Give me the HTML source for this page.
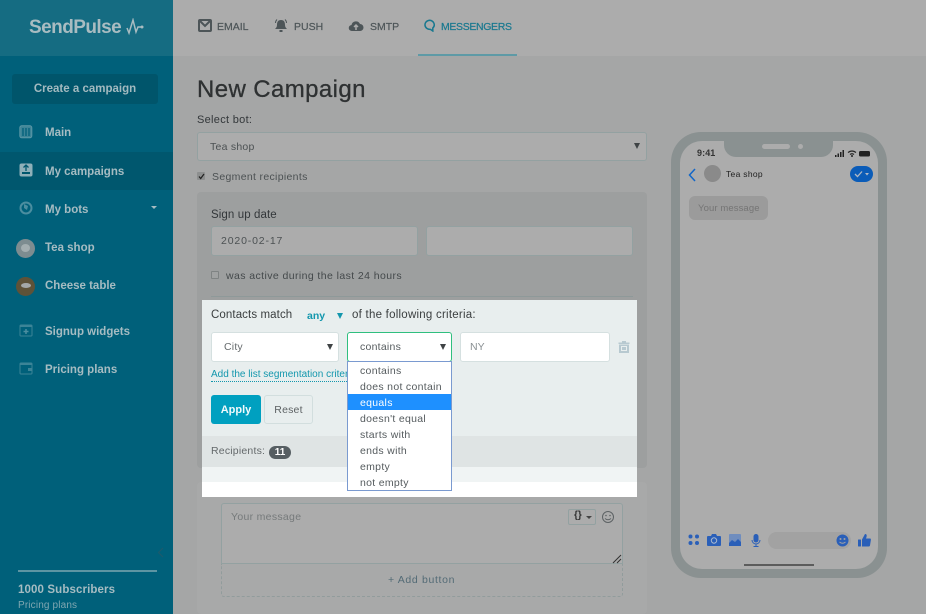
<!DOCTYPE html>
<html><head><meta charset="utf-8"><style>
*{box-sizing:border-box}
html,body{margin:0;padding:0}
body{width:926px;height:614px;overflow:hidden;position:relative;background:#a5a6a6;font-family:"Liberation Sans",sans-serif;font-size:11px;color:#3a3e3f}
.a{position:absolute}
.t{position:absolute;white-space:nowrap;line-height:14px;margin-top:1px}
.nav{color:#a6bcc2;font-weight:bold;font-size:11.5px;left:45px}
.inp{position:absolute;background:#acacac;border:1px solid #93a1a1;border-radius:3px}
.w{position:absolute;background:#fff;border:1px solid #d5e0e0;border-radius:3px}
.tb{color:#4d5558;font-size:10.5px;top:19px;-webkit-text-stroke:.2px currentColor}
.o{position:absolute;left:0;width:103px;height:16px;padding-left:12px;line-height:18px;font-size:10.5px;letter-spacing:.3px;color:#555b5e;white-space:nowrap;overflow:hidden}
.ar{position:absolute;border-left:3.5px solid transparent;border-right:3.5px solid transparent;border-top:6px solid #3f4345}
svg{position:absolute;display:block}
</style></head><body>

<!-- top bar -->
<div class="a" style="left:173px;top:0;width:753px;height:56px;background:#acacac"></div>
<div class="a" style="left:418px;top:54px;width:99px;height:2px;background:#5e9aa6"></div>
<svg style="left:198px;top:19px" width="14" height="13" viewBox="0 0 14 13"><rect x="1" y="1" width="12" height="11" rx="1" fill="none" stroke="#4d5558" stroke-width="2"/><path d="M2 2l5 5 5-5" fill="none" stroke="#4d5558" stroke-width="2"/></svg>
<div class="t tb" style="left:217px">EMAIL</div>
<svg style="left:274px;top:18px" width="14" height="15" viewBox="0 0 14 15"><path d="M7 2c-3 0-4 2-4 5 0 2-1 3-2 4h12c-1-1-2-2-2-4 0-3-1-5-4-5z" fill="#4d5558"/><rect x="5.500" y="12" width="3" height="2" fill="#4d5558"/><path d="M1.500 5q0-2 1.500-3.500M12.500 5q0-2-1.500-3.500" fill="none" stroke="#4d5558"/></svg>
<div class="t tb" style="left:294px">PUSH</div>
<svg style="left:348px;top:19px" width="16" height="13" viewBox="0 0 16 13"><path d="M4 12a3 3 0 0 1-.5-6A4.500 4.500 0 0 1 12 5a3.500 3.500 0 0 1 0 7z" fill="#4d5558"/><path d="M8 11V6M6 8l2-2 2 2" stroke="#acacac" stroke-width="1.500" fill="none"/></svg>
<div class="t tb" style="left:370px">SMTP</div>
<svg style="left:423px;top:19px" width="13" height="13" viewBox="0 0 13 13"><path d="M6.500 1.200a5 4.600 0 1 0 1 9.200l2.300 1.600v-3a5 4.600 0 0 0-3.300-7.800z" fill="none" stroke="#18788f" stroke-width="1.500"/></svg>
<div class="t tb" style="left:441px;color:#18788f;letter-spacing:-.35px">MESSENGERS</div>

<!-- sidebar -->
<div class="a" style="left:0;top:0;width:173px;height:614px;background:#00607a"></div>
<div class="a" style="left:0;top:0;width:173px;height:56px;background:#156c82"></div>
<div class="t" style="left:29px;top:15px;font-size:19px;line-height:24px;color:#a9bcc1;letter-spacing:-.55px;font-weight:bold">SendPulse</div>
<svg style="left:125px;top:18px" width="20" height="18" viewBox="0 0 20 18"><path d="M2 10l2 5 4-13 3 12 2-5h3" fill="none" stroke="#a9bcc1" stroke-width="1.500"/><circle cx="17" cy="9" r="1.500" fill="#a9bcc1"/></svg>
<div class="a" style="left:12px;top:74px;width:146px;height:30px;background:#00556b;border-radius:3px"></div>
<div class="t" style="left:12px;top:81px;width:146px;text-align:center;color:#a3bac0;font-weight:bold;font-size:11.5px">Create a campaign</div>
<div class="a" style="left:0;top:152px;width:173px;height:38px;background:#00576e"></div>

<svg style="left:19px;top:125px" width="14" height="14" viewBox="0 0 14 14"><rect x=".8" y=".8" width="12" height="12" rx="2" fill="#3c8497" stroke="#5c97a6" stroke-width="1"/><path d="M4 3v8M7 3v8M10 3v8" stroke="#00607a" stroke-width="1.300"/></svg>
<div class="t nav" style="top:125px">Main</div>
<svg style="left:19px;top:163px" width="14" height="14" viewBox="0 0 14 14"><rect x=".5" y=".5" width="13" height="13" rx="2" fill="#8fb0b9"/><path d="M7 2v6M4.500 4.500L7 2l2.500 2.500" stroke="#00576e" stroke-width="1.300" fill="none"/><rect x="3" y="9" width="8" height="2" fill="#00576e"/></svg>
<div class="t nav" style="top:164px">My campaigns</div>
<svg style="left:19px;top:201px" width="14" height="14" viewBox="0 0 14 14"><circle cx="7" cy="7" r="5.500" fill="none" stroke="#4c8ea0" stroke-width="2"/><path d="M5 3l4 2-1 4-3-2z" fill="#4c8ea0"/></svg>
<div class="t nav" style="top:202px">My bots</div>
<div class="a" style="left:151px;top:206px;border-left:3px solid transparent;border-right:3px solid transparent;border-top:3px solid #a6bcc2"></div>
<div class="a" style="left:16px;top:239px;width:19px;height:19px;border-radius:50%;background:#7d8c90"></div>
<div class="a" style="left:21px;top:244px;width:9px;height:8px;border-radius:50%;background:#a4aeb0"></div>
<div class="t nav" style="top:240px">Tea shop</div>
<div class="a" style="left:16px;top:277px;width:19px;height:19px;border-radius:50%;background:#5e5238"></div>
<div class="a" style="left:21px;top:283px;width:10px;height:5px;border-radius:50%;background:#a4a8a8"></div>
<div class="t nav" style="top:278px">Cheese table</div>
<svg style="left:19px;top:324px" width="14" height="13" viewBox="0 0 14 13"><rect x=".5" y=".5" width="13" height="12" rx="1.500" fill="#3c8497"/><rect x="1.500" y="3" width="11" height="8.500" fill="#00607a"/><path d="M7 5v5M4.500 7.500h5" stroke="#4c8ea0" stroke-width="1.500"/></svg>
<div class="t nav" style="top:324px">Signup widgets</div>
<svg style="left:19px;top:362px" width="14" height="13" viewBox="0 0 14 13"><rect x=".5" y=".5" width="13" height="12" rx="1.500" fill="#3c8497"/><rect x="1.500" y="3" width="11" height="8.500" fill="#00607a"/><rect x="9" y="6" width="4" height="3" fill="#3c8497"/></svg>
<div class="t nav" style="top:362px">Pricing plans</div>
<svg style="left:157px;top:547px" width="7" height="11" viewBox="0 0 7 11"><path d="M6 1L1.500 5.500 6 10" fill="none" stroke="#1f5a6b" stroke-width="1"/></svg>
<div class="a" style="left:18px;top:570px;width:139px;height:2px;background:#5d95a3"></div>
<div class="t" style="left:18px;top:582px;color:#a6bcc2;font-weight:bold;font-size:11.500px;letter-spacing:.12px">1000 Subscribers</div>
<div class="t" style="left:18px;top:598px;color:#80a7b1;font-size:10px;letter-spacing:.15px">Pricing plans</div>

<!-- main -->
<div class="t" style="left:197px;top:75px;font-size:24px;line-height:28px;color:#2e3132;letter-spacing:.4px;-webkit-text-stroke:.3px #2e3132">New Campaign</div>
<div class="t" style="left:197px;top:112px;color:#33373a;letter-spacing:.3px">Select bot:</div>
<div class="inp" style="left:197px;top:132px;width:450px;height:29px"></div>
<div class="t" style="left:210px;top:139px;font-size:10.500px;color:#4c5153;letter-spacing:.25px">Tea shop</div>
<div class="ar" style="left:634px;top:143px"></div>
<div class="a" style="left:197px;top:172px;width:8px;height:8px;background:#8d8f8f;border-radius:1px"></div>
<svg style="left:198px;top:173px" width="7" height="7" viewBox="0 0 7 7"><path d="M1 3.500l1.700 2L6 1" fill="none" stroke="#222" stroke-width="1.200"/></svg>
<div class="t" style="left:212px;top:169px;font-size:10.500px;color:#4c5153;letter-spacing:.32px">Segment recipients</div>

<!-- gray panel -->
<div class="a" style="left:197px;top:192px;width:450px;height:276px;background:#9d9f9f;border-radius:4px"></div>
<div class="t" style="left:211px;top:207px;color:#33373a;font-size:11.5px;letter-spacing:.1px">Sign up date</div>
<div class="inp" style="left:211px;top:226px;width:207px;height:30px"></div>
<div class="t" style="left:221px;top:233px;font-size:10.500px;color:#4c5153;letter-spacing:.85px">2020-02-17</div>
<div class="inp" style="left:426px;top:226px;width:207px;height:30px"></div>
<div class="a" style="left:211px;top:271px;width:8px;height:8px;background:#a0a2a2;border:1px solid #7f8383;border-radius:1px"></div>
<div class="t" style="left:226px;top:268px;font-size:10.500px;color:#44494b;letter-spacing:.41px">was active during the last 24 hours</div>
<div class="a" style="left:211px;top:296px;width:422px;height:1px;background:#8e9999"></div>

<!-- second gray card -->
<div class="a" style="left:197px;top:482px;width:450px;height:132px;background:#a8a9a9;border-radius:4px"></div>
<div class="a" style="left:221px;top:503px;width:402px;height:61px;background:#acacac;border:1px solid #93a1a1;border-radius:3px 3px 0 0"></div>
<div class="t" style="left:231px;top:509px;font-size:10.500px;color:#767a7b;letter-spacing:.3px">Your message</div>
<div class="a" style="left:568px;top:509px;width:28px;height:16px;border:1px solid #93a1a1;border-radius:2px"></div>
<div class="t" style="left:574px;top:508px;font-size:10px;color:#333;font-weight:bold">{}</div>
<div class="a" style="left:586px;top:516px;border-left:3px solid transparent;border-right:3px solid transparent;border-top:3px solid #444"></div>
<svg style="left:601px;top:510px" width="14" height="14" viewBox="0 0 14 14"><circle cx="7" cy="7" r="5.500" fill="none" stroke="#5d6264" stroke-width="1"/><circle cx="5" cy="5.500" r=".8" fill="#5d6264"/><circle cx="9" cy="5.500" r=".8" fill="#5d6264"/><path d="M4 8.500q3 2.500 6 0" fill="none" stroke="#5d6264"/></svg>
<svg style="left:612px;top:554px" width="10" height="10" viewBox="0 0 10 10"><path d="M1 9l8-8M5 9l4-4" stroke="#333" stroke-width="1"/></svg>
<div class="a" style="left:221px;top:564px;width:402px;height:33px;border:1px dashed #919c9c;border-top:0;border-radius:0 0 3px 3px"></div>
<div class="t" style="left:388px;top:572px;font-size:10.500px;color:#536b76;letter-spacing:.65px">+ Add button</div>

<!-- highlight -->
<div class="a" style="left:202px;top:300px;width:435px;height:197px;background:#fff"></div>
<div class="a" style="left:202px;top:300px;width:435px;height:182px;background:#f0f4f4"></div>
<div class="a" style="left:202px;top:300px;width:435px;height:136px;background:#e8eeee"></div>
<div class="a" style="left:202px;top:436px;width:435px;height:31px;background:#dfe4e4"></div>
<div class="t" style="left:211px;top:307px;color:#3a3e3f;font-size:11.5px;letter-spacing:.1px">Contacts match</div>
<div class="t" style="left:307px;top:308px;color:#1397ad;font-size:10.500px;font-weight:bold">any</div>
<div class="ar" style="left:337px;top:313px;border-top-color:#1397ad"></div>
<div class="t" style="left:352px;top:307px;color:#3a3e3f;font-size:11.5px;letter-spacing:.24px">of the following criteria:</div>

<div class="w" style="left:211px;top:332px;width:128px;height:30px"></div>
<div class="t" style="left:224px;top:339px;font-size:10.500px;color:#666b6d;letter-spacing:.2px">City</div>
<div class="ar" style="left:327px;top:344px"></div>
<div class="w" style="left:347px;top:332px;width:105px;height:30px;border-color:#2fbf7f"></div>
<div class="t" style="left:360px;top:339px;font-size:10.500px;color:#555b5e;letter-spacing:.25px">contains</div>
<div class="ar" style="left:440px;top:344px"></div>
<div class="w" style="left:460px;top:332px;width:150px;height:30px"></div>
<div class="t" style="left:470px;top:339px;font-size:10.500px;color:#8a9093">NY</div>
<svg style="left:618px;top:340px" width="12" height="13" viewBox="0 0 12 13"><path d="M4 1h4v1.500h3.500V4H.5V2.500H4zM1 4.500h10V13H1z" fill="#b7c9d0"/><rect x="3.500" y="6.500" width="5" height="4" fill="none" stroke="#e8eeee"/></svg>

<div class="t" style="left:211px;top:368px;font-size:10px;color:#1397ad;width:136px;overflow:hidden;border-bottom:1px dotted #1397ad;line-height:12px;height:13px">Add the list segmentation criteria</div>
<div class="a" style="left:211px;top:395px;width:50px;height:29px;background:#00a0c0;border-radius:3px"></div>
<div class="t" style="left:211px;top:402px;width:50px;text-align:center;color:#f0fafc;font-weight:bold;font-size:11px">Apply</div>
<div class="a" style="left:264px;top:395px;width:49px;height:29px;border:1px solid #d2dede;border-radius:3px"></div>
<div class="t" style="left:264px;top:402px;width:49px;text-align:center;color:#5d6264;font-size:10.500px;letter-spacing:.2px">Reset</div>
<div class="t" style="left:211px;top:443px;color:#64696b;font-size:10.500px;letter-spacing:.2px">Recipients:</div>
<div class="a" style="left:269px;top:446px;width:22px;height:13px;background:#565e62;border-radius:7px;color:#fff;font-weight:bold;font-size:10px;line-height:13px;text-align:center">11</div>

<!-- dropdown list -->
<div class="a" style="left:347px;top:361px;width:105px;height:130px;background:#fff;border:1px solid #7a9ad0">
<div class="o" style="top:0">contains</div>
<div class="o" style="top:16px">does not contain</div>
<div class="o" style="top:32px;background:#1e90ff;color:#fff">equals</div>
<div class="o" style="top:48px">doesn't equal</div>
<div class="o" style="top:64px">starts with</div>
<div class="o" style="top:80px">ends with</div>
<div class="o" style="top:96px">empty</div>
<div class="o" style="top:112px">not empty</div>
</div>

<!-- phone -->
<div class="a" style="left:671px;top:132px;width:216px;height:446px;background:#8a9191;border-radius:30px"></div>
<div class="a" style="left:680px;top:141px;width:198px;height:428px;background:#acacac;border-radius:22px"></div>
<div class="a" style="left:724px;top:141px;width:109px;height:16px;background:#8a9191;border-radius:0 0 12px 12px"></div>
<div class="a" style="left:762px;top:144px;width:28px;height:5px;background:#acacac;border-radius:3px"></div>
<div class="a" style="left:798px;top:144px;width:5px;height:5px;background:#acacac;border-radius:50%"></div>
<div class="t" style="left:697px;top:145px;font-size:9px;font-weight:bold;color:#333;letter-spacing:.1px">9:41</div>
<svg style="left:834px;top:149px" width="36" height="8" viewBox="0 0 36 8"><path d="M1 6h1.500v2H1zM3.500 4.500H5V8H3.500zM6 3h1.500v5H6zM8.500 1H10v7H8.500z" fill="#222"/><path d="M14 3.500q4-3 8 0M16 5.500q2-1.500 4 0" fill="none" stroke="#222" stroke-width="1.100"/><circle cx="18" cy="7" r="1" fill="#222"/><rect x="25" y="2" width="11" height="5.500" rx="1.500" fill="#222"/></svg>
<svg style="left:688px;top:168px" width="8" height="14" viewBox="0 0 8 14"><path d="M7 1L1.500 7 7 13" fill="none" stroke="#1166c8" stroke-width="1.500"/></svg>
<div class="a" style="left:704px;top:165px;width:17px;height:17px;background:#8a8a8a;border-radius:50%"></div>
<div class="t" style="left:726px;top:166px;font-size:8.500px;color:#222;letter-spacing:.3px">Tea shop</div>
<div class="a" style="left:850px;top:166px;width:23px;height:16px;background:#0b5cb8;border-radius:8px"></div>
<svg style="left:854px;top:170px" width="16" height="8" viewBox="0 0 16 8"><path d="M1 4l2.500 2.500L8 1.500" fill="none" stroke="#b0b8c4" stroke-width="1.300"/><path d="M11 3h4l-2 2.500z" fill="#b0b8c4"/></svg>
<div class="a" style="left:689px;top:196px;width:79px;height:24px;background:#9b9b9b;border-radius:6px"></div>
<div class="t" style="left:698px;top:201px;font-size:9.500px;color:#757575;letter-spacing:.1px">Your message</div>

<svg style="left:688px;top:534px" width="12" height="12" viewBox="0 0 12 12" fill="#2a5fb8"><circle cx="2.500" cy="2.500" r="2"/><circle cx="9" cy="2.500" r="2"/><circle cx="2.500" cy="9" r="2"/><circle cx="9" cy="9" r="2"/></svg>
<svg style="left:707px;top:534px" width="14" height="12" viewBox="0 0 14 12"><path d="M1 2h3l1-2h4l1 2h3a1 1 0 0 1 1 1v8a1 1 0 0 1-1 1H1a1 1 0 0 1-1-1V3a1 1 0 0 1 1-1z" fill="#2a5fb8"/><circle cx="7" cy="6.500" r="2.700" fill="none" stroke="#a9b9d0" stroke-width="1"/></svg>
<svg style="left:729px;top:534px" width="12" height="12" viewBox="0 0 12 12"><rect width="12" height="12" rx="1" fill="#6f8dbe"/><path d="M0 9l3-3 3 2 3-3 3 3v4H0z" fill="#2a5fb8"/></svg>
<svg style="left:751px;top:534px" width="10" height="13" viewBox="0 0 10 13"><rect x="2.500" y="0" width="5" height="8.500" rx="2.500" fill="#2a5fb8"/><path d="M1 6a4 4 0 0 0 8 0M5 10.500v2M2.500 12.500h5" fill="none" stroke="#2a5fb8"/></svg>
<div class="a" style="left:768px;top:532px;width:83px;height:17px;background:#a2a2a2;border-radius:9px"></div>
<svg style="left:836px;top:534px" width="13" height="13" viewBox="0 0 13 13"><circle cx="6.500" cy="6.500" r="6" fill="#2a5fb8"/><circle cx="4.500" cy="5" r="1" fill="#a2a2a2"/><circle cx="8.500" cy="5" r="1" fill="#a2a2a2"/><path d="M3.500 8q3 2.500 6 0" fill="none" stroke="#a2a2a2"/></svg>
<svg style="left:858px;top:534px" width="13" height="13" viewBox="0 0 13 13" fill="#2a5fb8"><rect x="0" y="5.500" width="3" height="7" rx=".5"/><path d="M4 5.500L7 0c1.500 0 2 1 1.500 3l-.5 1.500h4c1 0 1 1 .8 2L12 11.500c-.2.700-.7 1-1.500 1H4z"/></svg>
<div class="a" style="left:744px;top:564px;width:70px;height:2px;background:#5c5c5c"></div>
</body></html>
